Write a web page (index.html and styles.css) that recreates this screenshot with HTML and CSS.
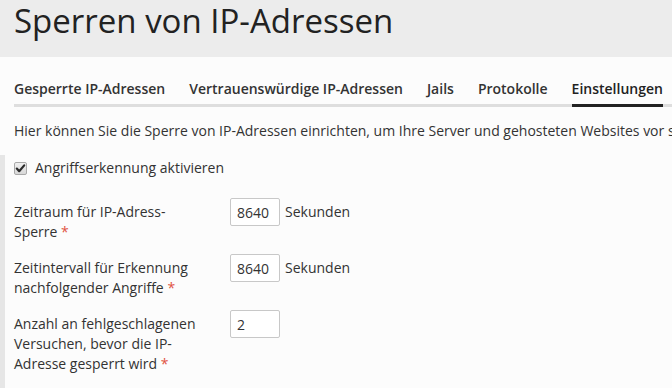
FILE: index.html
```html
<!DOCTYPE html>
<html lang="de">
<head>
<meta charset="utf-8">
<link rel="stylesheet" href="styles.css">
</head>
<body>
<header class="page-header">
  <h1 class="title">Sperren von IP-Adressen</h1>
</header>
<nav class="tabs">
  <a class="tab">Gesperrte IP-Adressen</a>
  <a class="tab">Vertrauenswürdige IP-Adressen</a>
  <a class="tab">Jails</a>
  <a class="tab">Protokolle</a>
  <a class="tab active">Einstellungen</a>
</nav>
<p class="intro">Hier können Sie die Sperre von IP-Adressen einrichten, um Ihre Server und gehosteten Websites vor schädlichen Angriffen zu schützen.</p>
<section class="form">
  <label class="check"><span class="box"><svg width="11" height="11" viewBox="0 0 11 11"><path d="M1.8 5.6 L4.2 8.2 L9.2 2.4" fill="none" stroke="#2b2b2b" stroke-width="2.2" stroke-linecap="round" stroke-linejoin="round"/></svg></span>Angriffserkennung aktivieren</label>
  <div class="row">
    <div class="label">Zeitraum für IP-Adress-Sperre <span class="req">*</span></div>
    <div class="field"><input class="num" type="text" value="8640"><span class="unit">Sekunden</span></div>
  </div>
  <div class="row">
    <div class="label">Zeitintervall für Erkennung nachfolgender Angriffe <span class="req">*</span></div>
    <div class="field"><input class="num" type="text" value="8640"><span class="unit">Sekunden</span></div>
  </div>
  <div class="row">
    <div class="label">Anzahl an fehlgeschlagenen Versuchen, bevor die IP-Adresse gesperrt wird <span class="req">*</span></div>
    <div class="field"><input class="num" type="text" value="2"></div>
  </div>
</section>
</body>
</html>
```
FILE: styles.css
```css
html, body {
  margin: 0;
  padding: 0;
  background: #fcfcfc;
  font-family: "Open Sans", "DejaVu Sans", sans-serif;
  color: #333;
  overflow: hidden;
}
.page-header {
  background: #ececec;
  height: 57px;
  padding: 1px 14px 0;
  box-sizing: border-box;
}
.title {
  margin: 0;
  font-size: 33px;
  line-height: 40px;
  font-weight: 400;
  color: #222;
  white-space: nowrap;
}
.tabs {
  display: flex;
  gap: 24px;
  margin: 19px 0 0 14px;
  border-bottom: 3px solid #dedede;
  white-space: nowrap;
  font-size: 14px;
  font-weight: 600;
}
.tab {
  color: #333;
  padding: 3px 0 6px;
  line-height: 19px;
  margin-bottom: -3px;
  border-bottom: 3px solid transparent;
}
.tab.active {
  color: #222;
  border-bottom-color: #222;
}
.intro {
  margin: 14px 0 0 14px;
  font-size: 14px;
  line-height: 20px;
  white-space: nowrap;
}
.form {
  margin-top: 14px;
  border-left: 5px solid #e6e6e6;
  padding: 3px 0 20px 9px;
  font-size: 14px;
  line-height: 20px;
}
.check {
  display: flex;
  align-items: center;
  gap: 8px;
}
.box {
  width: 13px;
  height: 13px;
  box-sizing: border-box;
  border: 1px solid #a9a9a9;
  border-radius: 2px;
  background: linear-gradient(#f0f0f0, #d8d8d8);
  display: flex;
  align-items: center;
  justify-content: center;
}
.box svg {
  display: block;
}
.row {
  display: flex;
  margin-top: 20px;
}
.row + .row {
  margin-top: 12px;
}
.label {
  width: 190px;
  padding-top: 4px;
}
.req {
  color: #e05243;
}
.field {
  display: flex;
  align-items: center;
  gap: 5px;
  height: 28px;
  margin-left: 26px;
}
.num {
  width: 50px;
  height: 28px;
  box-sizing: border-box;
  border: 1px solid #c8c8c8;
  border-radius: 2px;
  background: #fff;
  padding: 0 6px;
  font: inherit;
  color: #333;
  text-align: left;
}
.unit {
  color: #333;
}
```
